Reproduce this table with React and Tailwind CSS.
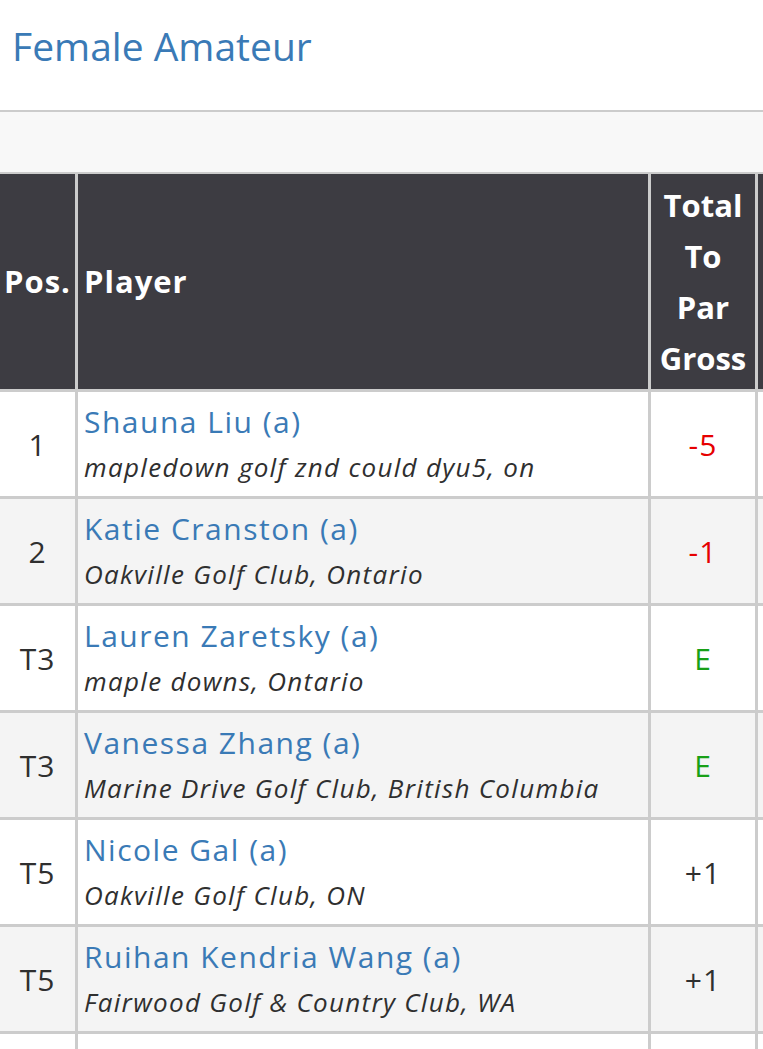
import React from 'react';

const rows = [
  { pos: '1', name: 'Shauna Liu (a)', club: 'mapledown golf znd could dyu5, on', score: '-5' },
  { pos: '2', name: 'Katie Cranston (a)', club: 'Oakville Golf Club, Ontario', score: '-1' },
  { pos: 'T3', name: 'Lauren Zaretsky (a)', club: 'maple downs, Ontario', score: 'E' },
  { pos: 'T3', name: 'Vanessa Zhang (a)', club: 'Marine Drive Golf Club, British Columbia', score: 'E' },
  { pos: 'T5', name: 'Nicole Gal (a)', club: 'Oakville Golf Club, ON', score: '+1' },
  { pos: 'T5', name: 'Ruihan Kendria Wang (a)', club: 'Fairwood Golf & Country Club, WA', score: '+1' },
];

const scoreColor = (s) => {
  if (s.startsWith('-')) return 'text-[#e60000]';
  if (s === 'E') return 'text-[#17a017]';
  return 'text-[#2f2f2f]';
};

const LeaderRow = ({ row, idx }) => {
  const bg = idx % 2 === 0 ? 'bg-white' : 'bg-[#f4f4f4]';
  return (
    <div className={`flex h-[107px] border-b-[3px] border-[#cccccc] ${bg}`}>
      <div className="w-[78px] shrink-0 border-r-[3px] border-[#cccccc] flex items-center justify-center text-[30px] tracking-[1px] text-[#2f2f2f]">
        {row.pos}
      </div>
      <div className="w-[573px] shrink-0 border-r-[3px] border-[#cccccc] pl-[6px] flex flex-col justify-center">
        <div className="text-[30px] leading-[36px] tracking-[1.5px] text-[#3a7ab6] whitespace-nowrap">{row.name}</div>
        <div className="mt-[9px] text-[26px] leading-[36px] tracking-[1.3px] italic text-[#2f2f2f] whitespace-nowrap">{row.club}</div>
      </div>
      <div className={`w-[107px] shrink-0 border-r-[3px] border-[#cccccc] flex items-center justify-center text-[30px] tracking-[1px] ${scoreColor(row.score)}`}>
        {row.score}
      </div>
      <div className="w-[100px] shrink-0" />
    </div>
  );
};

export default function App() {
  return (
    <div className="w-[763px] h-[1049px] overflow-hidden bg-white font-['Open_Sans',sans-serif]">
      <div className="h-[110px] pl-[12px] pt-[22px]">
        <h1 className="text-[39px] leading-[48px] text-[#3a7ab6]">Female Amateur</h1>
      </div>
      <div className="h-[62px] border-t-2 border-[#cccccc] bg-[#f8f8f8]" />

      <div className="w-[900px] border-t-2 border-[#cccccc]">
        {/* header */}
        <div className="flex h-[218px] border-b-[3px] border-[#cccccc] bg-[#3d3c42] text-white font-bold text-[31px]">
          <div className="w-[78px] shrink-0 border-r-[3px] border-[#cccccc] flex items-center justify-center tracking-[1px]">
            Pos.
          </div>
          <div className="w-[573px] shrink-0 border-r-[3px] border-[#cccccc] pl-[6px] flex items-center tracking-[1px]">
            Player
          </div>
          <div className="w-[107px] shrink-0 border-r-[3px] border-[#cccccc] flex items-center justify-center text-center leading-[51px]">
            <div>
              Total
              <br />
              To
              <br />
              Par
              <br />
              Gross
            </div>
          </div>
          <div className="w-[100px] shrink-0" />
        </div>

        {rows.map((row, idx) => (
          <LeaderRow key={idx} row={row} idx={idx} />
        ))}
        <div className="flex h-[107px] bg-white">
          <div className="w-[78px] shrink-0 border-r-[3px] border-[#cccccc]" />
          <div className="w-[573px] shrink-0 border-r-[3px] border-[#cccccc]" />
          <div className="w-[107px] shrink-0 border-r-[3px] border-[#cccccc]" />
        </div>
      </div>
    </div>
  );
}
